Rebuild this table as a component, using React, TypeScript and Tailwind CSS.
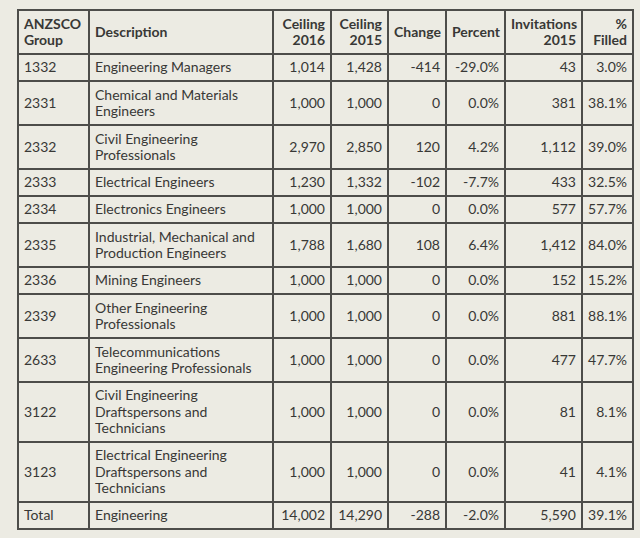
const rows: { code: string; desc: string[]; c16: string; c15: string; chg: string; pct: string; inv: string; fill: string }[] = [
  { code: "1332", desc: ["Engineering Managers"], c16: "1,014", c15: "1,428", chg: "-414", pct: "-29.0%", inv: "43", fill: "3.0%" },
  { code: "2331", desc: ["Chemical and Materials", "Engineers"], c16: "1,000", c15: "1,000", chg: "0", pct: "0.0%", inv: "381", fill: "38.1%" },
  { code: "2332", desc: ["Civil Engineering", "Professionals"], c16: "2,970", c15: "2,850", chg: "120", pct: "4.2%", inv: "1,112", fill: "39.0%" },
  { code: "2333", desc: ["Electrical Engineers"], c16: "1,230", c15: "1,332", chg: "-102", pct: "-7.7%", inv: "433", fill: "32.5%" },
  { code: "2334", desc: ["Electronics Engineers"], c16: "1,000", c15: "1,000", chg: "0", pct: "0.0%", inv: "577", fill: "57.7%" },
  { code: "2335", desc: ["Industrial, Mechanical and", "Production Engineers"], c16: "1,788", c15: "1,680", chg: "108", pct: "6.4%", inv: "1,412", fill: "84.0%" },
  { code: "2336", desc: ["Mining Engineers"], c16: "1,000", c15: "1,000", chg: "0", pct: "0.0%", inv: "152", fill: "15.2%" },
  { code: "2339", desc: ["Other Engineering", "Professionals"], c16: "1,000", c15: "1,000", chg: "0", pct: "0.0%", inv: "881", fill: "88.1%" },
  { code: "2633", desc: ["Telecommunications", "Engineering Professionals"], c16: "1,000", c15: "1,000", chg: "0", pct: "0.0%", inv: "477", fill: "47.7%" },
  { code: "3122", desc: ["Civil Engineering", "Draftspersons and", "Technicians"], c16: "1,000", c15: "1,000", chg: "0", pct: "0.0%", inv: "81", fill: "8.1%" },
  { code: "3123", desc: ["Electrical Engineering", "Draftspersons and", "Technicians"], c16: "1,000", c15: "1,000", chg: "0", pct: "0.0%", inv: "41", fill: "4.1%" },
  { code: "Total", desc: ["Engineering"], c16: "14,002", c15: "14,290", chg: "-288", pct: "-2.0%", inv: "5,590", fill: "39.1%" },
];

// row height by number of text lines
const rowH: Record<number, string> = {
  1: "h-[27px]",
  2: "h-[44px]",
  3: "h-[60px]",
};

// thick-ish grid lines like the original jpeg
const cell = "border-2 border-[#4d4d4a] px-[5px] py-0 align-middle";

const Lines = ({ lines }: { lines: string[] }) => (
  <>
    {lines.map((l, i) => (
      <div key={i} className="whitespace-nowrap">
        {l}
      </div>
    ))}
  </>
);

export default function App() {
  return (
    <div className="w-[640px] h-[538px] bg-[#ecebe3] pt-[9px] pl-[17px] font-['Lato',sans-serif] text-[14px] leading-[16.5px] text-[#383836]">
      <table className="table-fixed border-collapse w-[615px]">
        <colgroup>
          <col className="w-[71px]" />
          <col className="w-[184px]" />
          <col className="w-[58px]" />
          <col className="w-[57px]" />
          <col className="w-[58px]" />
          <col className="w-[59px]" />
          <col className="w-[77px]" />
          <col className="w-[51px]" />
        </colgroup>
        <thead>
          <tr className="font-bold h-[44px]">
            <th className={`${cell} text-left`}>
              <Lines lines={["ANZSCO", "Group"]} />
            </th>
            <th className={`${cell} text-left`}>Description</th>
            <th className={`${cell} text-right`}>
              <Lines lines={["Ceiling", "2016"]} />
            </th>
            <th className={`${cell} text-right`}>
              <Lines lines={["Ceiling", "2015"]} />
            </th>
            <th className={`${cell} text-right`}>Change</th>
            <th className={`${cell} text-right`}>Percent</th>
            <th className={`${cell} text-right`}>
              <Lines lines={["Invitations", "2015"]} />
            </th>
            <th className={`${cell} text-right`}>
              <Lines lines={["%", "Filled"]} />
            </th>
          </tr>
        </thead>
        <tbody>
          {rows.map((r) => (
            <tr key={r.code} className={rowH[r.desc.length]}>
              <td className={`${cell} text-left`}>{r.code}</td>
              <td className={`${cell} text-left`}>
                <Lines lines={r.desc} />
              </td>
              <td className={`${cell} text-right`}>{r.c16}</td>
              <td className={`${cell} text-right`}>{r.c15}</td>
              <td className={`${cell} text-right`}>{r.chg}</td>
              <td className={`${cell} text-right`}>{r.pct}</td>
              <td className={`${cell} text-right`}>{r.inv}</td>
              <td className={`${cell} text-right`}>{r.fill}</td>
            </tr>
          ))}
        </tbody>
      </table>
    </div>
  );
}
